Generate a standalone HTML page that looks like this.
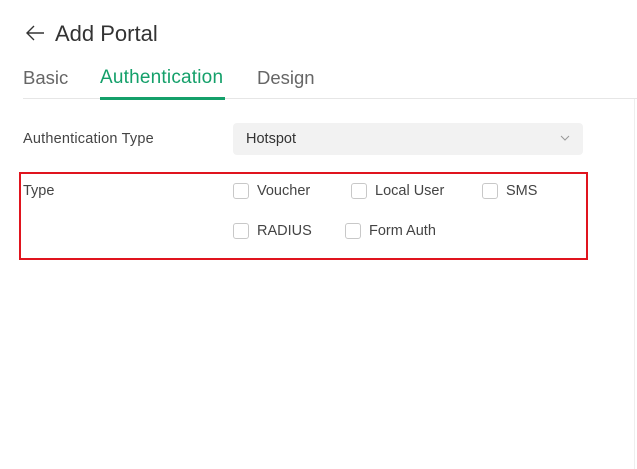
<!DOCTYPE html>
<html><head><style>
body{margin:0;width:637px;height:469px;background:#fff;font-family:"Liberation Sans",sans-serif;position:relative;overflow:hidden;color:#333}
.a{position:absolute;white-space:nowrap}
.cb{position:absolute;width:14px;height:14px;border:1px solid #c8c8c8;border-radius:3px;background:#fff}
.l{position:absolute;font-size:14.5px;color:#444;white-space:nowrap}
</style></head><body>
<svg class="a" style="left:24px;top:24px" width="22" height="18" viewBox="0 0 22 18"><path d="M20 9H3M10 2L3 9l7 7" fill="none" stroke="#333" stroke-width="1.4"/></svg>
<div class="a" style="left:55px;top:21px;font-size:22px;color:#333">Add Portal</div>
<div class="a" style="left:23px;top:67px;font-size:18.5px;color:#666">Basic</div>
<div class="a" style="left:100px;top:67px;font-size:19px;color:#14a06a;letter-spacing:0.2px">Authentication</div>
<div class="a" style="left:257px;top:67px;font-size:18.5px;color:#666">Design</div>
<div class="a" style="left:23px;top:98px;width:614px;height:1px;background:#e6e6e6"></div>
<div class="a" style="left:100px;top:97px;width:125px;height:3px;background:#14a06a"></div>
<div class="a" style="left:634px;top:99px;width:1px;height:370px;background:#eee"></div>
<div class="l" style="left:23px;top:131px;letter-spacing:0.2px">Authentication Type</div>
<div class="a" style="left:233px;top:123px;width:350px;height:32px;background:#f2f2f2;border-radius:4px"></div>
<div class="l" style="left:246px;top:131px;color:#333">Hotspot</div>
<svg class="a" style="left:560px;top:135px" width="10" height="6"><path d="M1 1l4 4 4-4" fill="none" stroke="#999" stroke-width="1"/></svg>
<div class="a" style="left:19px;top:172px;width:565px;height:84px;border:2px solid #e0141e"></div>
<div class="l" style="left:23px;top:183px">Type</div>
<div class="cb" style="left:233px;top:183px"></div><div class="l" style="left:257px;top:183px">Voucher</div>
<div class="cb" style="left:351px;top:183px"></div><div class="l" style="left:375px;top:183px">Local User</div>
<div class="cb" style="left:482px;top:183px"></div><div class="l" style="left:506px;top:183px">SMS</div>
<div class="cb" style="left:233px;top:223px"></div><div class="l" style="left:257px;top:223px">RADIUS</div>
<div class="cb" style="left:345px;top:223px"></div><div class="l" style="left:369px;top:223px">Form Auth</div>
</body></html>
